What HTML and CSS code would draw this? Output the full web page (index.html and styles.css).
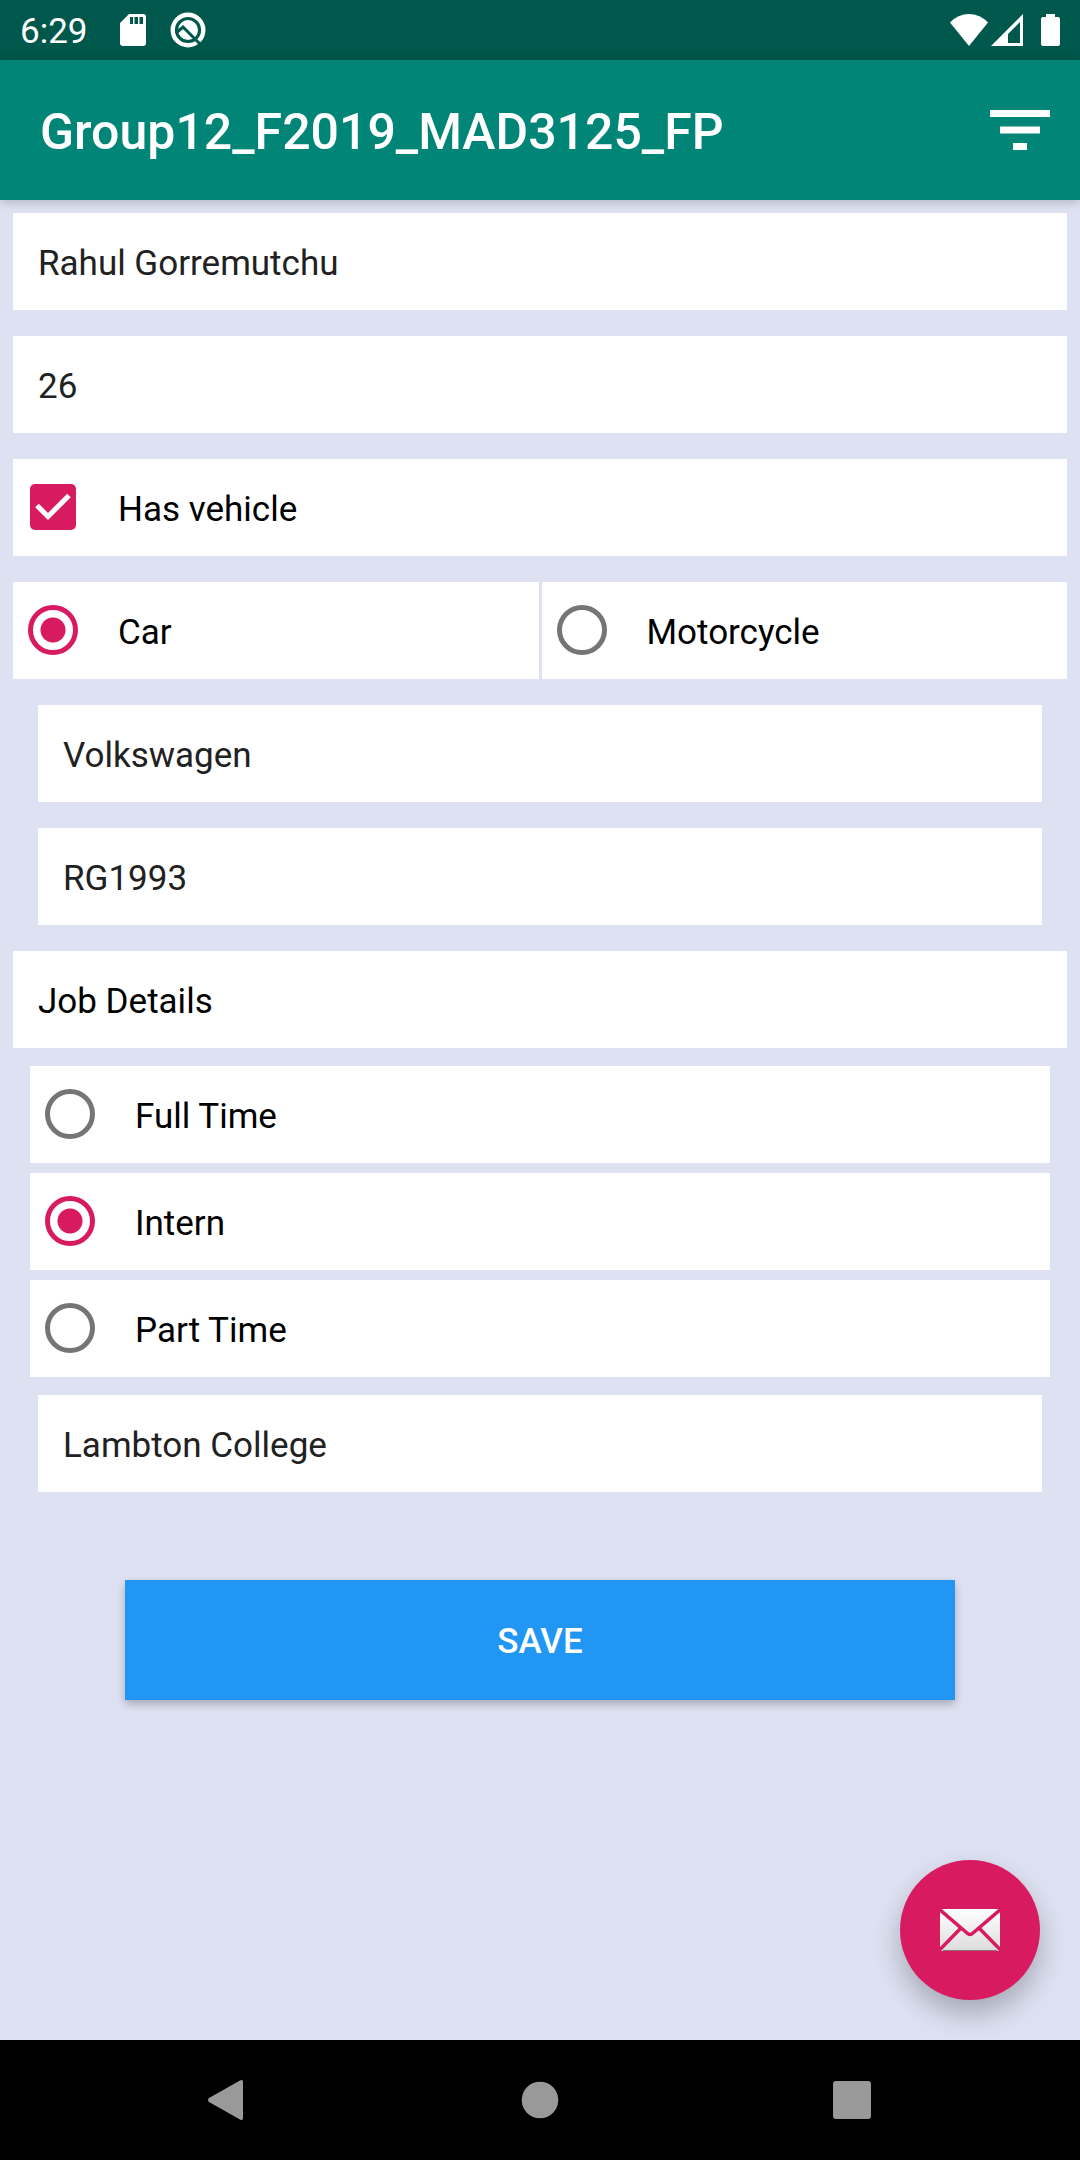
FILE: index.html
```html
<!DOCTYPE html>
<html lang="en">
<head>
<meta charset="utf-8">
<meta name="viewport" content="width=device-width, initial-scale=1">
<title>Group12_F2019_MAD3125_FP</title>
<link rel="stylesheet" href="styles.css">
</head>
<body>
<div class="screen">
  <div class="status-bar">
    <span class="clock">6:29</span>
    <svg class="status-icon sd" width="26" height="32" viewBox="0 0 26 32" aria-hidden="true">
      <path fill="#fff" fill-rule="evenodd" d="M9 0H23Q26 0 26 3V29Q26 32 23 32H3Q0 32 0 29V9ZM10 3V10H13V3ZM14.500 3V10H18V3ZM19.500 3V10H23V3Z"/>
    </svg>
    <svg class="status-icon" width="36" height="36" viewBox="0 0 36 36" aria-hidden="true">
      <circle cx="18" cy="18" r="15.300" fill="none" stroke="#fff" stroke-width="4.400"/>
      <circle cx="18" cy="18" r="10" fill="#fff"/>
      <path fill="none" stroke="#00574b" stroke-width="3" d="M6 21L13 15L32 34"/>
    </svg>
    <svg class="status-icon wifi" width="38" height="32" viewBox="0 0 38 32" aria-hidden="true">
      <path fill="#fff" d="M0 8.500Q8 0 19 0T38 8.500L19 32Z"/>
    </svg>
    <svg class="status-icon signal" width="32" height="32" viewBox="0 0 32 32" aria-hidden="true">
      <path fill="#fff" fill-rule="evenodd" d="M32 0V32H0ZM29 8L17 20V29H29Z"/>
    </svg>
    <svg class="status-icon battery" width="19" height="32" viewBox="0 0 19 32" aria-hidden="true">
      <path fill="#fff" d="M5 0H14V3H17Q19 3 19 5V30Q19 32 17 32H2Q0 32 0 30V5Q0 3 2 3H5Z"/>
    </svg>
  </div>

  <header class="app-bar">
    <h1 class="app-title">Group12_F2019_MAD3125_FP</h1>
    <button class="icon-button" type="button" aria-label="Filter">
      <svg width="60" height="40" viewBox="0 0 60 40" aria-hidden="true">
        <path fill="#fff" d="M0 0H60V7H0ZM10 16.500H50V23.500H10ZM23 33H37V40H23Z"/>
      </svg>
    </button>
  </header>

  <main class="content">
    <form class="form">
      <input class="row field" type="text" value="Rahul Gorremutchu" aria-label="Name">
      <input class="row field" type="text" value="26" inputmode="numeric" aria-label="Age">
      <label class="row option"><input class="check" type="checkbox" checked><span>Has vehicle</span></label>
      <div class="split">
        <label class="row option"><input class="radio" type="radio" name="vehicle" checked><span>Car</span></label>
        <label class="row option"><input class="radio" type="radio" name="vehicle"><span>Motorcycle</span></label>
      </div>
      <div class="indent">
        <input class="row field" type="text" value="Volkswagen" aria-label="Vehicle make">
        <input class="row field" type="text" value="RG1993" aria-label="Plate number">
      </div>
      <h2 class="row heading">Job Details</h2>
      <div class="jobs">
        <label class="row option"><input class="radio" type="radio" name="job"><span>Full Time</span></label>
        <label class="row option"><input class="radio" type="radio" name="job" checked><span>Intern</span></label>
        <label class="row option"><input class="radio" type="radio" name="job"><span>Part Time</span></label>
      </div>
      <div class="indent">
        <input class="row field" type="text" value="Lambton College" aria-label="College">
      </div>
      <button class="save" type="button">SAVE</button>
    </form>
    <button class="fab" type="button" aria-label="Send mail">
      <svg width="60" height="42" viewBox="0 0 60 42" aria-hidden="true">
        <defs>
          <linearGradient id="paper" x1="0" y1="0" x2="0" y2="1">
            <stop offset="0" stop-color="#fff"/>
            <stop offset="1" stop-color="#dcdcdc"/>
          </linearGradient>
        </defs>
        <rect width="60" height="42" fill="url(#paper)"/>
        <path d="M3 41.500H57" stroke="#8d6f78" stroke-width="1"/>
        <path fill="none" stroke="#d81b60" stroke-width="3.500" d="M-1 0L27 24Q30 27 33 24L61 0M-1 41.500L20 20M61 41.500L40 20"/>
      </svg>
    </button>
  </main>

  <nav class="nav-bar">
    <button class="nav-button" type="button" aria-label="Back">
      <svg width="50" height="50" viewBox="0 0 50 50" aria-hidden="true"><path fill="#999" d="M6 23L37 5.500Q40 4 40 7V43Q40 46 37 44.500L6 27Q4 25 6 23Z"/></svg>
    </button>
    <button class="nav-button" type="button" aria-label="Home">
      <svg width="50" height="50" viewBox="0 0 50 50" aria-hidden="true"><circle cx="25" cy="25" r="18.300" fill="#999"/></svg>
    </button>
    <button class="nav-button" type="button" aria-label="Recent apps">
      <svg width="50" height="50" viewBox="0 0 50 50" aria-hidden="true"><rect x="6" y="6" width="38" height="38" rx="3" fill="#999"/></svg>
    </button>
  </nav>
</div>
</body>
</html>
```

FILE: styles.css
```css
* {
  box-sizing: border-box;
}

body {
  margin: 0;
  background: #dee1f2;
  color: #000;
  font-family: Roboto, "Liberation Sans", sans-serif;
  font-size: 35px;
  line-height: 41px;
}

button,
input {
  margin: 0;
  border: 0;
  border-radius: 0;
  font: inherit;
}

svg {
  display: block;
}

.screen {
  display: flex;
  flex-direction: column;
  min-height: 100vh;
}

/* System status bar */
.status-bar {
  display: flex;
  align-items: center;
  height: 60px;
  padding: 0 20px;
  background: #00574b;
  color: #fff;
}

.clock {
  margin-right: 32px;
  padding-top: 2px;
}

.status-icon {
  flex: none;
}

.sd {
  margin-right: 24px;
}

.wifi {
  margin-left: auto;
}

.signal {
  margin-left: 3px;
}

.battery {
  margin-left: 18px;
}

/* App bar */
.app-bar {
  display: flex;
  align-items: center;
  justify-content: space-between;
  height: 140px;
  padding: 0 30px 0 40px;
  background: #008577;
  color: #fff;
  box-shadow: 0 2px 10px rgba(0, 0, 0, 0.2);
}

.app-title {
  margin: 0;
  padding-top: 4px;
  font-size: 50px;
  font-weight: 500;
  line-height: 60px;
}

.icon-button {
  padding: 0;
  background: none;
}

/* Form */
.content {
  position: relative;
  flex: 1;
  padding: 13px 13px 240px;
}

.form,
.indent,
.jobs {
  display: flex;
  flex-direction: column;
}

.form,
.indent {
  gap: 26px;
}

.indent {
  padding: 0 25px;
}

.row {
  width: 100%;
  height: 97px;
  background: #fff;
}

.field {
  padding: 3px 25px 0;
  color: #212121;
}

.option {
  display: flex;
  align-items: center;
  gap: 40px;
  padding-left: 15px;
}

.option span,
.heading {
  padding-top: 3px;
}

.heading {
  display: flex;
  align-items: center;
  margin: 0;
  padding-left: 25px;
  font-size: 35px;
  font-weight: 400;
}

.split {
  display: grid;
  grid-template-columns: 1fr 1fr;
  gap: 3px;
}

.jobs {
  gap: 10px;
  margin: -8px 0;
  padding: 0 17px;
}

.check,
.radio {
  flex: none;
  margin-bottom: 2px;
  appearance: none;
}

.check {
  width: 46px;
  height: 46px;
  margin-right: 2px;
  margin-left: 2px;
  border-radius: 5px;
  background: #d81b60 url("data:image/svg+xml,%3Csvg xmlns='http://www.w3.org/2000/svg' viewBox='0 0 46 46'%3E%3Cpath d='M7 21.500L18 32.500L39 11.500' fill='none' stroke='%23fff' stroke-width='5'/%3E%3C/svg%3E");
}

.radio {
  width: 50px;
  height: 50px;
  border: 5px solid #757575;
  border-radius: 50%;
}

.radio:checked {
  border-color: #d81b60;
  background: radial-gradient(circle, #d81b60 12px, transparent 13px);
}

.save {
  height: 120px;
  margin: 62px 112px 0;
  padding: 3px 0 0;
  background: #2196f3;
  color: #fff;
  font-weight: 500;
  box-shadow: 0 4px 8px rgba(0, 0, 0, 0.25);
}

.fab {
  position: absolute;
  right: 40px;
  bottom: 40px;
  display: flex;
  align-items: center;
  justify-content: center;
  width: 140px;
  height: 140px;
  border-radius: 50%;
  background: #d81b60;
  box-shadow: 0 14px 28px rgba(0, 0, 0, 0.25);
}

/* System navigation */
.nav-bar {
  position: relative;
  display: grid;
  grid-template-columns: repeat(3, 1fr);
  height: 120px;
  padding: 0 72px;
  background: #000;
}

.nav-button {
  display: flex;
  align-items: center;
  justify-content: center;
  background: none;
}
```
